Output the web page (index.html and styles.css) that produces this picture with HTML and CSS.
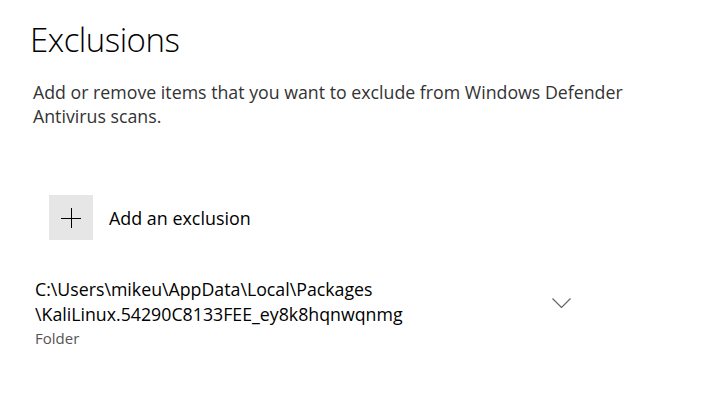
FILE: index.html
```html
<!DOCTYPE html>
<html>
<head>
<meta charset="utf-8">
<link rel="stylesheet" href="styles.css">
</head>
<body>
<main class="page">
  <h1 class="title">Exclusions</h1>
  <p class="desc">Add or remove items that you want to exclude from Windows Defender Antivirus scans.</p>
  <div class="add">
    <div class="add-icon">
      <svg width="20" height="20" viewBox="0 0 20 20"><path d="M10 0V20M0 10H20" stroke="#000" stroke-width="1" fill="none" shape-rendering="crispEdges"/></svg>
    </div>
    <span class="add-label">Add an exclusion</span>
  </div>
  <div class="item">
    <div class="item-text">
      <div class="path">C:\Users\mikeu\AppData\Local\Packages<br>\KaliLinux.54290C8133FEE_ey8k8hqnwqnmg</div>
      <div class="kind">Folder</div>
    </div>
    <svg class="chev" width="19" height="10" viewBox="0 0 19 10"><path d="M0.5 0.5L9.5 9.5L18.5 0.5" stroke="#666" stroke-width="1.2" fill="none"/></svg>
  </div>
</main>
</body>
</html>
```
FILE: styles.css
```css
html, body {
  margin: 0;
  background: #fff;
}
body {
  font-family: "Open Sans", "Noto Sans", sans-serif;
  color: #000;
}
.page {
  padding: 18px 0 0 30px;
  width: 640px;
}
.title {
  margin: 0;
  font-size: 33px;
  font-weight: 300;
  line-height: 44px;
  letter-spacing: -0.5px;
}
.desc {
  margin: 18px 0 0 3px;
  font-size: 17.75px;
  line-height: 24px;
  color: #333;
  width: 620px;
}
.add {
  display: flex;
  align-items: center;
  margin: 67px 0 0 19px;
}
.add-icon {
  width: 44px;
  height: 45px;
  background: #e6e6e6;
  display: flex;
  align-items: center;
  justify-content: center;
}
.add-label {
  margin-left: 16px;
  font-size: 17.9px;
}
.item {
  display: flex;
  align-items: center;
  margin: 37px 0 0 5px;
  width: 536px;
}
.item-text {
  flex: 1;
}
.path {
  font-size: 17.75px;
  line-height: 25px;
}
.kind {
  font-size: 15px;
  color: #555;
  line-height: 22px;
}
.chev {
  margin-top: -20px;
}
```
